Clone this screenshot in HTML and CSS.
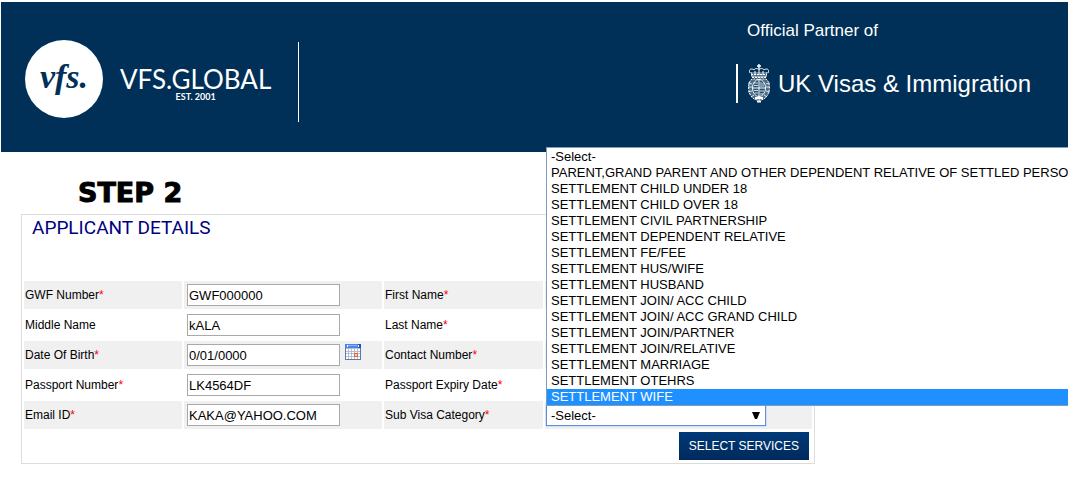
FILE: index.html
```html
<!DOCTYPE html>
<html lang="en">
<head>
    <meta charset="UTF-8">
    <title>Applicant Details</title>
    <link rel="stylesheet" href="styles.css">
</head>
<body>

<header class="banner">
    <div class="brand">
        <span class="brand-badge">vfs.</span>
        <p class="brand-name">VFS.GLOBAL<small>EST. 2001</small></p>
    </div>
    <div class="partner">
        <p class="partner-title">Official Partner of</p>
        <div class="partner-name">
            <svg class="crest" viewBox="0 0 22 39" fill="none" stroke="#fff">
                <!-- crown -->
                <path d="M11 0v5M9 2h4" stroke-width="1.4"/>
                <path d="M2 9C0 5 4 4 6 6c1-2 4-2 5 0 1-2 4-2 5 0 2-2 6-1 4 3" stroke-width="1"/>
                <path d="M3 8l1 5h14l1-5" fill="#fff" fill-opacity=".35" stroke-width=".8"/>
                <path d="M7 7v4M11 6v5M15 7v4" stroke-width="1"/>
                <path d="M3 10.5h16M4 13.5h14" stroke-width="1.2" stroke-dasharray="2 1"/>
                <!-- supporters -->
                <path d="M4 15c-5 3-4 15 0 18 2 3 5 3 7 3s5 0 7-3c4-3 5-15 0-18z" fill="#fff" fill-opacity=".3" stroke-width="1" stroke-dasharray="2 1"/>
                <path d="M0 19l4 1M0 23l4 0M0 28l4-1M22 19l-4 1M22 23l-4 0M22 28l-4-1M3 33l3-2M19 33l-3-2" stroke-width=".8"/>
                <!-- shield -->
                <ellipse cx="11" cy="24" rx="6.5" ry="8.500" fill="#003057" fill-opacity=".5" stroke-width="1"/>
                <path d="M11 15v18M5 24h12" stroke-width="1"/>
                <path d="M6 19h4M6 21.5h4M13 18v5M15 19v4M6 26.5h4M7 29h3M12 27h4M12 30h3" stroke-width=".8"/>
                <path d="M7 34h8M9 37.5h4" stroke-width="1.8"/>
            </svg>
            <span>UK Visas &amp; Immigration</span>
        </div>
    </div>
</header>

<main class="content">
    <h1>STEP 2</h1>
    <form class="panel">
        <h2>APPLICANT DETAILS</h2>
        <div class="fields">
            <div class="cell shade"><label for="gwf">GWF Number<i>*</i></label></div>
            <div class="cell shade"><input type="text" id="gwf" value="GWF000000"></div>
            <div class="cell shade"><span>First Name<i>*</i></span></div>
            <div class="cell shade"></div>

            <div class="cell"><label for="middle-name">Middle Name</label></div>
            <div class="cell"><input type="text" id="middle-name" value="kALA"></div>
            <div class="cell"><span>Last Name<i>*</i></span></div>
            <div class="cell"></div>

            <div class="cell shade"><label for="birth">Date Of Birth<i>*</i></label></div>
            <div class="cell shade">
                <input type="text" id="birth" value="0/01/0000">
                <button type="button" class="calendar" aria-label="Choose date">
                    <svg viewBox="0 0 16 16">
                        <path fill="#5c7aa8" d="M0 0h16v16H0z"/>
                        <path fill="#4f83e6" d="M0 0h16v4H0z"/>
                        <path fill="#8db4fa" d="M3 1h9v1H3z"/>
                        <path fill="#1f4fb8" d="M13 0h3v4h-3z"/>
                        <path fill="#fff" d="M2 1h1v2H2zM13 1h1v2h-1z"/>
                        <path fill="#b5bfd3" d="M1 4h14v11H1z"/>
                        <path fill="#fff" d="M1 5h2v2H1zM4 5h2v2H4zM7 5h2v2H7zM10 5h2v2h-2zM13 5h2v2h-2zM1 8h2v1H1zM4 8h2v1H4zM7 8h2v1H7zM10 8h2v1h-2zM13 8h2v1h-2zM1 10h2v2H1zM4 10h2v2H4zM7 10h2v2H7zM13 10h2v2h-2zM1 13h2v2H1zM4 13h2v2H4zM7 13h2v2H7zM10 13h2v2h-2zM13 13h2v2h-2z"/>
                        <path fill="#fbd0b8" stroke="#e0603a" d="M9.500 9.500h3v3h-3z"/>
                    </svg>
                </button>
            </div>
            <div class="cell shade"><span>Contact Number<i>*</i></span></div>
            <div class="cell shade"></div>

            <div class="cell"><label for="passport">Passport Number<i>*</i></label></div>
            <div class="cell"><input type="text" id="passport" value="LK4564DF"></div>
            <div class="cell"><span>Passport Expiry Date<i>*</i></span></div>
            <div class="cell"></div>

            <div class="cell shade"><label for="email">Email ID<i>*</i></label></div>
            <div class="cell shade"><input type="text" id="email" value="KAKA@YAHOO.COM"></div>
            <div class="cell shade"><label for="category">Sub Visa Category<i>*</i></label></div>
            <div class="cell shade">
                <div class="dropdown">
                    <select id="category">
                        <option>-Select-</option>
                    </select>
                    <svg class="dropdown-arrow" viewBox="0 0 8 7"><path d="M0 0h8L5 7H3z"/></svg>
                    <ul class="options" role="listbox" aria-label="Sub Visa Category">
                        <li role="option">-Select-</li>
                        <li role="option">PARENT,GRAND PARENT AND OTHER DEPENDENT RELATIVE OF SETTLED PERSON</li>
                        <li role="option">SETTLEMENT CHILD UNDER 18</li>
                        <li role="option">SETTLEMENT CHILD OVER 18</li>
                        <li role="option">SETTLEMENT CIVIL PARTNERSHIP</li>
                        <li role="option">SETTLEMENT DEPENDENT RELATIVE</li>
                        <li role="option">SETTLEMENT FE/FEE</li>
                        <li role="option">SETTLEMENT HUS/WIFE</li>
                        <li role="option">SETTLEMENT HUSBAND</li>
                        <li role="option">SETTLEMENT JOIN/ ACC CHILD</li>
                        <li role="option">SETTLEMENT JOIN/ ACC GRAND CHILD</li>
                        <li role="option">SETTLEMENT JOIN/PARTNER</li>
                        <li role="option">SETTLEMENT JOIN/RELATIVE</li>
                        <li role="option">SETTLEMENT MARRIAGE</li>
                        <li role="option">SETTLEMENT OTEHRS</li>
                        <li role="option" class="active" aria-selected="true">SETTLEMENT WIFE</li>
                    </ul>
                </div>
            </div>
        </div>
        <div class="actions">
            <button type="button" class="submit">SELECT SERVICES</button>
        </div>
    </form>
</main>

</body>
</html>
```
FILE: styles.css
```css
* {
    box-sizing: border-box;
}
html, body, p, ul, h1, h2 {
    margin: 0;
    padding: 0;
}
body {
    font-family: "Liberation Sans", Arial, sans-serif;
    font-size: 12px;
    color: #000;
    background-color: #fff;
    overflow-x: hidden;
}

/* banner */
.banner {
    display: flex;
    justify-content: space-between;
    height: 150px;
    margin: 2px 0 0 1px;
    padding: 0 37px 0 24px;
    color: #fff;
    background-color: #003057;
}
.brand {
    display: flex;
    align-items: center;
    align-self: flex-start;
    height: 80px;
    margin-top: 40px;
    padding-right: 27px;
    border-right: 1px solid #fff;
}
.brand-badge {
    width: 78px;
    height: 78px;
    margin-bottom: 6px;
    border-radius: 50%;
    font: italic bold 34px/74px "Liberation Serif", serif;
    text-align: center;
    color: #003057;
    background-color: #fff;
}
.brand-name {
    margin-left: 17px;
    padding-top: 4px;
    font: 26px/26px Lato, sans-serif;
    text-align: center;
}
.brand-name small {
    display: block;
    font-size: 9px;
    font-weight: bold;
    line-height: 10px;
}
.partner {
    padding-top: 19px;
}
.partner-title {
    padding-left: 11px;
    font-size: 17px;
    line-height: 20px;
}
.partner-name {
    display: flex;
    align-items: center;
    height: 39px;
    margin-top: 23px;
    padding-left: 10px;
    border-left: 2px solid #fff;
    font-size: 24px;
    white-space: nowrap;
}
.crest {
    width: 22px;
    height: 39px;
    margin-right: 8px;
}

/* form */
.content {
    padding: 24px 21px;
}
h1 {
    padding-left: 57px;
    font: bold 27px/34px "DejaVu Sans", sans-serif;
    -webkit-text-stroke: 1px #000;
}
.panel {
    max-width: 794px;
    margin-top: 4px;
    padding: 2px;
    border: 1px solid #ddd;
}
h2 {
    height: 64px;
    padding-left: 8px;
    font: 19px/22px Roboto, sans-serif;
    color: #00007f;
}
.fields {
    display: grid;
    grid-template-columns: 158fr 198fr 159fr 267fr;
    gap: 2px;
}
.cell {
    display: flex;
    align-items: center;
    height: 28px;
    padding: 0 1px;
}
.shade {
    background-color: #f0f0f0;
}
.cell i {
    font-style: normal;
    color: #f00;
}
.cell input {
    width: 153px;
    height: 22px;
    margin-left: 2px;
    padding: 0 1px;
    border: 1px solid #a9a9a9;
    font: 13px "Liberation Sans", Arial, sans-serif;
}
.calendar {
    width: 16px;
    height: 16px;
    margin: 0 0 6px 5px;
    padding: 0;
    border: 0;
    background: none;
    cursor: pointer;
}
.calendar svg {
    display: block;
}
.dropdown {
    position: relative;
    width: 220px;
}
.dropdown select {
    display: block;
    width: 100%;
    height: 21px;
    padding: 0 4px;
    border: 1px solid #5e8fdc;
    box-shadow: 0 0 1px #5e8fdc;
    appearance: none;
    font: 13px "Liberation Sans", Arial, sans-serif;
    color: #000;
    background-color: #fff;
}
.dropdown-arrow {
    position: absolute;
    right: 6px;
    top: 7px;
    width: 8px;
    height: 7px;
    pointer-events: none;
}
.options {
    position: absolute;
    left: 0;
    bottom: 20px;
    z-index: 1;
    min-width: 100%;
    padding-top: 1px;
    border: 1px solid #7f9db9;
    list-style-type: none;
    background-color: #fff;
}
.options li {
    padding: 0 24px 0 4px;
    font-size: 13px;
    line-height: 16px;
    white-space: nowrap;
    cursor: default;
}
.options .active {
    color: #fff;
    background-color: #1e90ff;
}
.actions {
    padding: 3px 3px 1px;
    text-align: right;
}
.submit {
    height: 28px;
    padding: 0 10px;
    border: 0;
    font: 12px "Liberation Sans", Arial, sans-serif;
    color: #fff;
    background: linear-gradient(#003a78, #002a5c);
    cursor: pointer;
}
```
